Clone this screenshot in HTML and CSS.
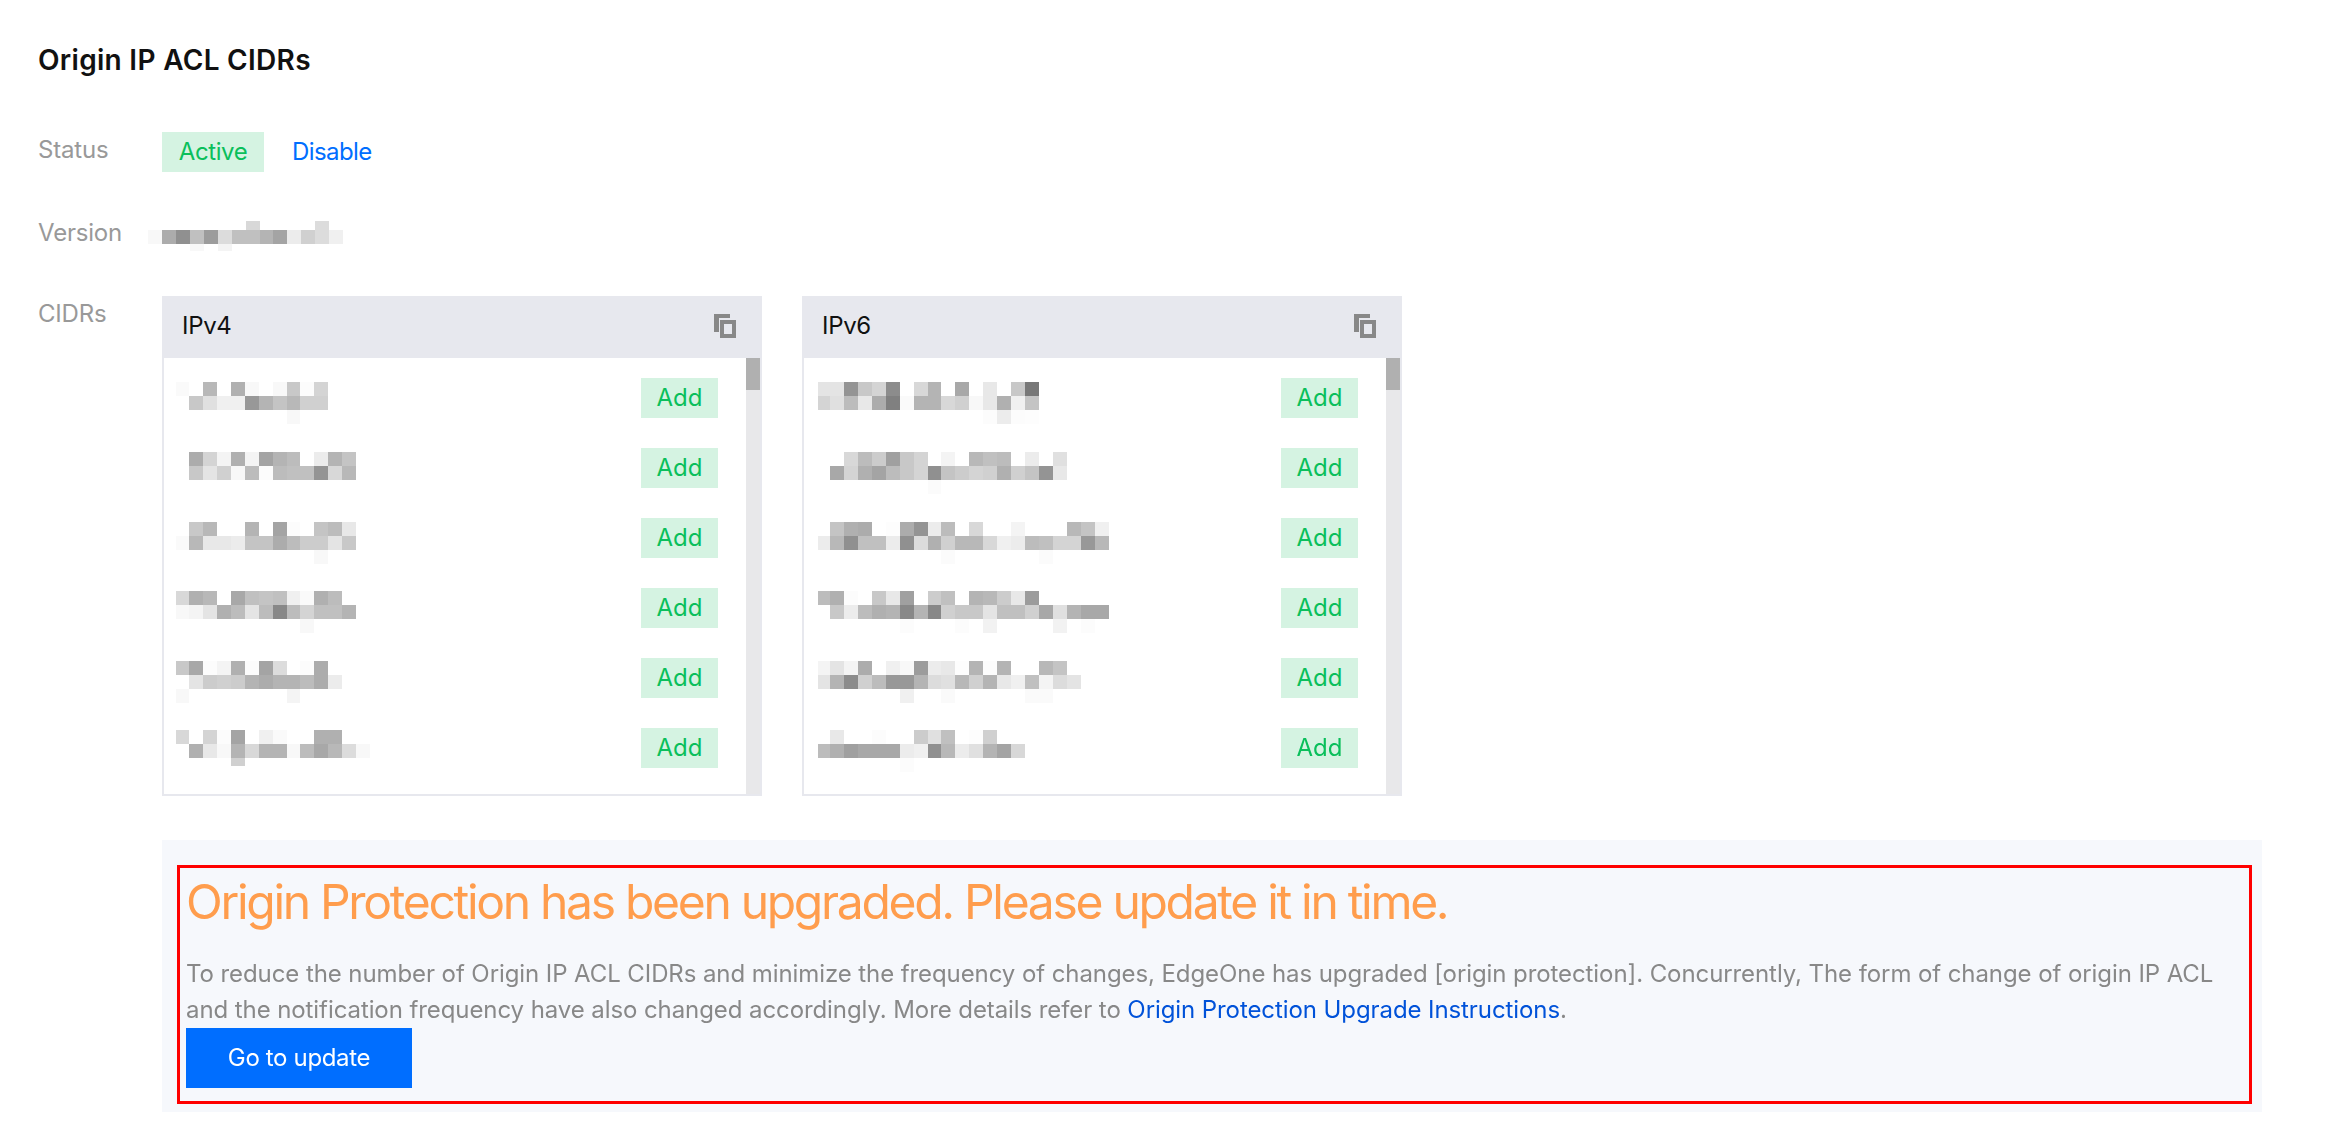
FILE: index.html
```html
<!DOCTYPE html>
<html lang="en">
<head>
    <meta charset="UTF-8">
    <meta name="viewport" content="width=device-width, initial-scale=1.0">
    <title>Origin IP ACL CIDRs</title>
    <link rel="stylesheet" href="styles.css">
</head>
<body>
    <div class="section">
        <h2 class="section-title">Origin IP ACL CIDRs</h2>

        <div class="field field-status">
            <div class="field-label">Status</div>
            <div class="field-value">
                <span class="tag tag-active">Active</span>
                <a class="link-disable" href="#">Disable</a>
            </div>
        </div>

        <div class="field field-version">
            <div class="field-label">Version</div>
            <div class="field-value version-value">
                <canvas class="mosaic" data-key="version"></canvas>
            </div>
        </div>

        <div class="field field-cidrs">
            <div class="field-label">CIDRs</div>
            <div class="field-value cidr-tables">
                <div class="cidr-table cidr-table-v4">
                    <div class="cidr-head">
                        <span>IPv4</span>
                        <svg class="copy-icon" viewBox="0 0 22 24"><path d="M0 0H16V4H5V18H0Z"/><path fill-rule="evenodd" d="M6 6H22V24H6ZM10 10V20H18V10Z"/></svg>
                    </div>
                    <div class="cidr-body">
                        <div class="cidr-list">
                            <div class="cidr-row"><canvas class="mosaic" data-key="v4-0"></canvas><span class="tag tag-add">Add</span></div>
                            <div class="cidr-row"><canvas class="mosaic" data-key="v4-1"></canvas><span class="tag tag-add">Add</span></div>
                            <div class="cidr-row"><canvas class="mosaic" data-key="v4-2"></canvas><span class="tag tag-add">Add</span></div>
                            <div class="cidr-row"><canvas class="mosaic" data-key="v4-3"></canvas><span class="tag tag-add">Add</span></div>
                            <div class="cidr-row"><canvas class="mosaic" data-key="v4-4"></canvas><span class="tag tag-add">Add</span></div>
                            <div class="cidr-row"><canvas class="mosaic" data-key="v4-5"></canvas><span class="tag tag-add">Add</span></div>
                        </div>
                        <div class="scroll-track"><div class="scroll-thumb"></div></div>
                    </div>
                </div>

                <div class="cidr-table cidr-table-v6">
                    <div class="cidr-head">
                        <span>IPv6</span>
                        <svg class="copy-icon" viewBox="0 0 22 24"><path d="M0 0H16V4H5V18H0Z"/><path fill-rule="evenodd" d="M6 6H22V24H6ZM10 10V20H18V10Z"/></svg>
                    </div>
                    <div class="cidr-body">
                        <div class="cidr-list">
                            <div class="cidr-row"><canvas class="mosaic" data-key="v6-0"></canvas><span class="tag tag-add">Add</span></div>
                            <div class="cidr-row"><canvas class="mosaic" data-key="v6-1"></canvas><span class="tag tag-add">Add</span></div>
                            <div class="cidr-row"><canvas class="mosaic" data-key="v6-2"></canvas><span class="tag tag-add">Add</span></div>
                            <div class="cidr-row"><canvas class="mosaic" data-key="v6-3"></canvas><span class="tag tag-add">Add</span></div>
                            <div class="cidr-row"><canvas class="mosaic" data-key="v6-4"></canvas><span class="tag tag-add">Add</span></div>
                            <div class="cidr-row"><canvas class="mosaic" data-key="v6-5"></canvas><span class="tag tag-add">Add</span></div>
                        </div>
                        <div class="scroll-track"><div class="scroll-thumb"></div></div>
                    </div>
                </div>
            </div>
        </div>

        <div class="notice">
            <div class="notice-box">
                <h1 class="notice-title">Origin Protection has been upgraded. Please update it in time.</h1>
                <p class="notice-text">To reduce the number of Origin IP ACL CIDRs and minimize the frequency of changes, EdgeOne has upgraded [origin protection]. Concurrently, The form of change of origin IP ACL<br>and the notification frequency have also changed accordingly. More details refer to <a href="#">Origin Protection Upgrade Instructions</a>.</p>
                <button class="btn-update">Go to update</button>
            </div>
        </div>
    </div>

    <script src="script.js"></script>
</body>
</html>
```

FILE: styles.css
```css
* {
    box-sizing: border-box;
}

body {
    margin: 0;
    background: #fff;
    font-family: Inter, "Noto Sans", sans-serif;
    font-size: 24px;
    line-height: 36px;
    letter-spacing: -0.2px;
}

.section {
    padding: 40px 76px 0 38px;
}

.section-title {
    margin: 0 0 52px;
    font-size: 28px;
    line-height: 40px;
    font-weight: 600;
    letter-spacing: 0.3px;
    color: #111;
}

.field {
    display: flex;
    margin-bottom: 42px;
}

.field-status {
    margin-bottom: 43px;
}

.field-version {
    margin-bottom: 41px;
}

.field-label {
    width: 124px;
    flex: none;
    line-height: 36px;
    color: #999;
}

.field-value {
    display: flex;
    align-items: center;
    height: 40px;
}

.version-value {
    margin-left: -14px;
    align-items: flex-start;
}

.mosaic {
    display: block;
    flex: none;
}

.tag {
    display: inline-flex;
    align-items: center;
    justify-content: center;
    height: 40px;
    background: #d5f3e2;
    color: #0abf5b;
}

.tag-active {
    width: 102px;
    letter-spacing: -0.4px;
}

.tag-add {
    width: 77px;
    letter-spacing: 0;
}

.link-disable {
    margin-left: 28px;
    letter-spacing: -0.6px;
    color: #006eff;
    text-decoration: none;
}

.field-cidrs {
    margin-bottom: 44px;
}

.cidr-tables {
    height: 500px;
    gap: 40px;
    align-items: stretch;
}

.cidr-table {
    width: 600px;
    height: 500px;
    display: flex;
    flex-direction: column;
    border: 2px solid #e7e8ee;
    border-top: 0;
}

.cidr-head {
    display: flex;
    justify-content: space-between;
    align-items: center;
    height: 62px;
    flex: none;
    margin: 0 -2px;
    padding: 0 26px 2px 20px;
    background: #e7e8ee;
    letter-spacing: -0.3px;
    color: #111;
}

.copy-icon {
    width: 22px;
    height: 24px;
    fill: #888;
}

.cidr-body {
    flex: 1;
    display: flex;
    min-height: 0;
}

.cidr-list {
    flex: 1;
    padding: 20px 28px 0 12px;
}

.cidr-table-v6 .cidr-list {
    padding-left: 14px;
}

.cidr-row {
    display: flex;
    justify-content: space-between;
    align-items: flex-start;
    height: 40px;
    margin-bottom: 30px;
}

.scroll-track {
    width: 14px;
    flex: none;
    background: #e8e8ea;
}

.scroll-thumb {
    height: 32px;
    background: #b0b0b0;
}

.notice {
    margin-left: 124px;
    height: 272px;
    padding: 25px 10px 8px 15px;
    background: #f6f8fc;
}

.notice-box {
    height: 239px;
    padding: 0 6px;
    border: 3px solid #f00;
}

.notice-title {
    margin: 0 0 20px;
    font-size: 48px;
    line-height: 68px;
    font-weight: 400;
    letter-spacing: -2.3px;
    color: #ff9d4d;
}

.notice-text {
    margin: 0;
    letter-spacing: -0.085px;
    color: #888;
}

.notice-text a {
    color: #0052d9;
    text-decoration: none;
}

.btn-update {
    display: block;
    width: 226px;
    height: 60px;
    padding: 0;
    border: 0;
    background: #006eff;
    color: #fff;
    font: inherit;
    letter-spacing: -0.35px;
}
```

FILE: script.js
```js
// gray levels of the blurred values, one string per pixel line, ff = white
const mosaics = {
    'version': { top: 6, first: 14, heights: [9, 14, 7], lines: [
        'ff ff ff ff ff ff ff d8 ff ff ff ff dc ff',
        'f8 ac 90 c0 9c dc c0 c0 b4 a4 ec d0 dc f0',
        'ff ff ff f8 ff f4 ff ff ff ff ff ff ff ff'] },

    'v4-0': { top: 4, first: 13, lines: [
        'fa ff b8 ff b0 f8 ff f8 c8 fc d4',
        'ff c8 e0 f0 f0 98 b4 c4 b8 d0 d0',
        'ff ff ff ff ff ff ff ff f8 ff ff'] },
    'v4-1': { top: 4, first: 13, lines: [
        'ff ac d4 f4 b0 f4 a4 b4 bc ff ec b4 c4',
        'ff c8 e4 d0 f8 bc fc bc c0 c0 94 d8 b8'] },
    'v4-2': { top: 4, first: 13, lines: [
        'ff c8 b8 ff ff b4 ff a4 fc ff c4 bc e8',
        'fa b8 e8 e8 ec c4 c4 ac bc cc cc e4 c8',
        'ff ff ff ff ff ff ff ff ff ff f8 ff ff'] },
    'v4-3': { top: 3, first: 13, lines: [
        'd8 b0 b8 ff a8 c0 c4 c0 f0 fa b0 bc ff',
        'f8 f4 e4 b0 bc e4 bc 88 bc d4 c0 c0 b4',
        'ff ff ff ff ff ff ff ff ff f8 ff ff ff'] },
    'v4-4': { top: 3, first: 13, lines: [
        'c8 a8 fc f4 b0 fc a4 dc ff fc ac ff',
        'ff e4 cc d0 cc b4 ac b4 b4 bc ac ec',
        'f8 ff ff ff ff ff ff ff f4 ff ff ff'] },
    'v4-5': { top: 2, first: 13, heights: [14, 14, 8], lines: [
        'd8 ff d4 fc a4 ff f0 fa ff ff b0 b0 ff ff ff',
        'ff b0 e8 f8 b4 d8 b4 b4 f8 bc a8 b8 dc f8 ff',
        'ff ff ff ff d0 ff ff ff ff ff ff ff ff ff ff'] },

    'v6-0': { top: 4, first: 12, lines: [
        'e4 e4 94 c8 d4 8c ff d8 b4 ff a8 ff e8 ff c8 78',
        'd4 e0 bc e8 ac 80 fa b4 b4 d8 d0 f8 e8 b0 f0 c4',
        'ff ff ff ff ff ff ff ff ff ff ff ff fc ec fc fd'] },
    'v6-1': { top: 4, first: 12, lines: [
        'ff ff d8 bc cc a0 c8 d4 ff f4 ff b8 c0 bc ff ec ff e0',
        'ff a8 d4 b0 a4 bc c8 d4 90 c4 cc d4 d0 b0 d0 c4 94 e8',
        'ff ff ff ff ff ff ff ff fb ff ff ff ff ff ff ff ff ff'] },
    'v6-2': { top: 4, first: 12, lines: [
        'ff c4 b0 ac ff fd ac 94 ec bc ff d8 ff ff f4 ff ff ff b8 c4 f0',
        'ec b8 90 c0 c0 ec 90 dc b0 d0 b8 b8 d8 f0 ec bc c0 d4 d4 98 b8',
        'ff ff ff ff ff ff ff ff ff fb ff ff ff ff ff ff fb ff ff ff ff'] },
    'v6-3': { top: 3, first: 12, lines: [
        'bc b0 fc ff c8 e8 a0 ff cc c0 ff b4 b8 cc e8 9c ff ff ff ff ff',
        'ff c8 ec bc b0 b4 88 b4 88 d0 c8 c8 e4 c0 c0 d0 a8 e0 b4 a8 a8',
        'ff ff ff ff ff ff fc ff ff ff fc ff f2 ff ff ff ff f2 ff fc ff'] },
    'v6-4': { top: 3, first: 12, lines: [
        'f4 e4 f4 ac ff f0 f8 9c ec e8 fd b4 fc b4 ff ff b8 c4 ff',
        'e4 b4 8c d0 bc 98 98 b4 dc e0 b8 d0 b4 e8 f0 c0 f4 dc e4',
        'ff ff ff ff ff ff f0 ff ff fa ff ff ff ff ff fa fa ff ff'] },
    'v6-5': { top: 2, first: 12, lines: [
        'ff e8 ff ff fc ff ff cc e0 c0 ff fd d0 ff ff',
        'bc b0 a0 a8 a8 a8 ec f0 90 b8 ec e0 b4 a4 d8',
        'ff ff ff ff ff ff fc ff ff ff ff ff ff ff ff'] }
};

const cellWidth = 13.93;

document.querySelectorAll('.mosaic').forEach(canvas => {
    const data = mosaics[canvas.dataset.key];
    const rows = data.lines.map(line => line.split(' '));
    const heights = data.heights || rows.map(() => 14);
    const edge = c => c === 0 ? 0 : Math.round(data.first + (c - 1) * cellWidth);

    canvas.width = edge(rows[0].length);
    canvas.height = data.top + heights.reduce((a, b) => a + b, 0);

    const ctx = canvas.getContext('2d');
    let y = data.top;
    rows.forEach((cells, r) => {
        cells.forEach((gray, c) => {
            ctx.fillStyle = '#' + gray + gray + gray;
            ctx.fillRect(edge(c), y, edge(c + 1) - edge(c), heights[r]);
        });
        y += heights[r];
    });
});
```
